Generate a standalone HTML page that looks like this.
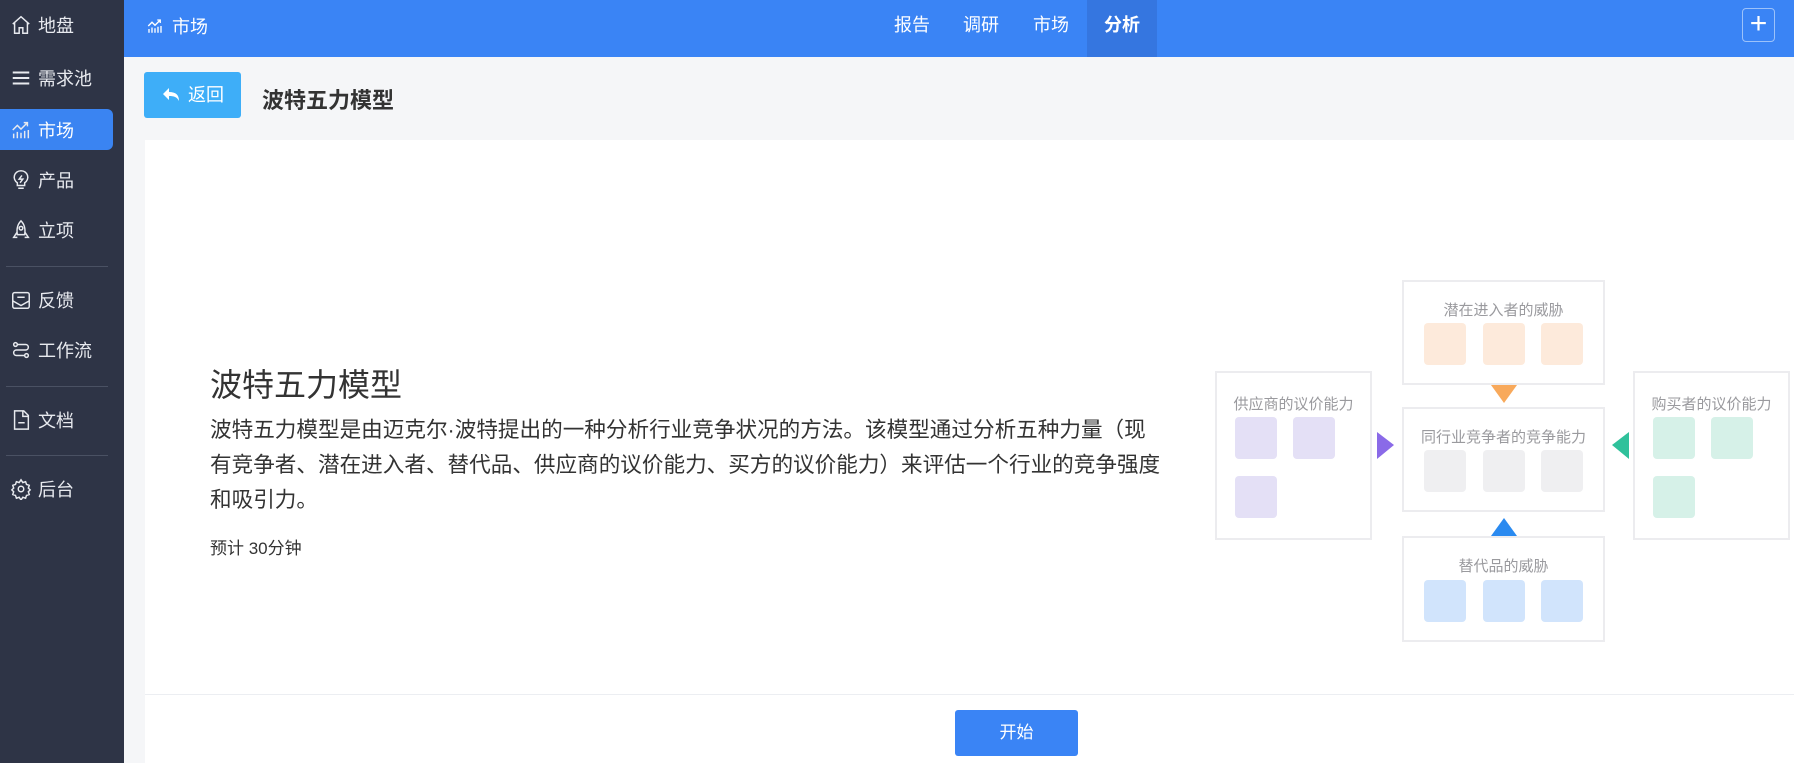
<!DOCTYPE html>
<html><head><meta charset="utf-8"><style>
*{margin:0;padding:0;box-sizing:border-box}
body{width:1794px;height:763px;overflow:hidden;background:#f5f6f8;font-family:"Liberation Sans","Noto Sans CJK SC",sans-serif;position:relative}
.side{position:absolute;left:0;top:0;width:124px;height:763px;background:#2e3446;color:#e8eaef}
.si{position:absolute;left:0;width:113px;height:40px;display:flex;align-items:center;font-size:18px;padding-left:10px}
.si svg{width:22px;height:22px;margin-right:6px;fill:none;stroke:#e8eaef;stroke-width:1.6}
.si.act{background:#3a84f2;border-radius:0 6px 6px 0;color:#fff}
.div{position:absolute;left:6px;width:102px;height:1px;background:#4a5163}
.hdr{position:absolute;left:124px;top:0;right:0;height:57px;background:#3a84f5;color:#fff}
.nav{position:absolute;top:0;height:57px;line-height:50px;font-size:18px;text-align:center}
.card{position:absolute;left:145px;top:140px;width:1649px;height:623px;background:#fff}
.sq{position:absolute;width:42px;height:42px;border-radius:4px}
.box{position:absolute;border:2px solid #ececef;background:#fff}
.bt{position:absolute;font-size:15px;color:#9a9a9e;text-align:center;width:100%}
</style></head><body>
<div class="side">
<div class="si" style="top:5px"><svg viewBox="0 0 24 24"><path d="M3 11l9-8 9 8M5 9v12h5v-6h4v6h5V9"/></svg>地盘</div>
<div class="si" style="top:58px"><svg viewBox="0 0 24 24"><path d="M3 6h18M3 12h18M3 18h18" stroke-width="2.2"/></svg>需求池</div>
<div class="si act" style="top:109px;height:41px"><svg viewBox="0 0 24 24"><path d="M3 12l5-5 4 4 7-7M15 4h4v4M4 21v-5M8 21v-7M12 21v-6M16 21v-8M20 21v-9"/></svg>市场</div>
<div class="si" style="top:160px"><svg viewBox="0 0 24 24"><path d="M12 2a7 7 0 0 0-4 13v3h8v-3a7 7 0 0 0-4-13zM9 21h6M13 7l-3 4h4l-3 4"/></svg>产品</div>
<div class="si" style="top:210px"><svg viewBox="0 0 24 24"><path d="M12 2c4 4 5 9 4 15H8C7 11 8 6 12 2zM8 14l-4 6h4M16 14l4 6h-4"/><circle cx="12" cy="10" r="2"/></svg>立项</div>
<div class="div" style="top:266px"></div>
<div class="si" style="top:280px"><svg viewBox="0 0 24 24"><rect x="3" y="4" width="18" height="17" rx="2"/><path d="M3 13l9 5 9-5M8 9h8"/></svg>反馈</div>
<div class="si" style="top:330px"><svg viewBox="0 0 24 24"><circle cx="6" cy="6" r="2"/><circle cx="18" cy="18" r="2"/><path d="M8 6h9a3 3 0 0 1 0 6H7a3 3 0 0 0 0 6h9"/></svg>工作流</div>
<div class="div" style="top:386px"></div>
<div class="si" style="top:400px"><svg viewBox="0 0 24 24"><path d="M5 2h10l5 5v15H5zM14 2v6h6M9 15h7"/></svg>文档</div>
<div class="div" style="top:455px"></div>
<div class="si" style="top:469px"><svg viewBox="0 0 24 24"><circle cx="12" cy="12" r="3"/><path d="M12 2l2 3 3-1 1 3 3 1-1 3 2 2-2 2 1 3-3 1-1 3-3-1-2 3-2-3-3 1-1-3-3-1 1-3-2-2 2-2-1-3 3-1 1-3 3 1z"/></svg>后台</div>
</div>
<div class="hdr">
<div style="position:absolute;left:22px;top:3px;font-size:18px;display:flex;align-items:center;height:46px"><svg viewBox="0 0 24 24" width="18" height="18" style="margin-right:8px;fill:none;stroke:#fff;stroke-width:1.8"><path d="M3 12l5-5 4 4 7-7M15 4h4v4M4 21v-5M8 21v-7M12 21v-6M16 21v-8M20 21v-9"/></svg>市场</div>
<div class="nav" style="left:762px;width:52px">报告</div>
<div class="nav" style="left:831px;width:52px">调研</div>
<div class="nav" style="left:901px;width:52px">市场</div>
<div class="nav" style="left:963px;width:70px;background:#3576e0;font-weight:bold">分析</div>
<div style="position:absolute;left:1618px;top:8px;width:33px;height:34px;border:1px solid #9cc2fa;border-radius:4px;color:#fff;font-size:30px;line-height:30px;text-align:center">+</div>
</div>
<div style="position:absolute;left:144px;top:72px;width:97px;height:46px;background:#3eaef8;border-radius:3px;color:#fff;font-size:18px;line-height:46px;padding-left:18px;display:flex;align-items:center"><svg width="18" height="16" viewBox="0 0 18 16" style="margin-right:8px"><path d="M7 1L1 7l6 6V9c5 0 8 1 10 5 0-6-3-9-10-9z" fill="#fff"/></svg>返回</div>
<div style="position:absolute;left:262px;top:83px;font-size:22px;font-weight:bold;color:#333">波特五力模型</div>
<div class="card">
<div style="position:absolute;left:65px;top:220px;font-size:32px;color:#333">波特五力模型</div>
<div style="position:absolute;left:65px;top:272px;width:955px;font-size:21.6px;line-height:35px;color:#333">波特五力模型是由迈克尔·波特提出的一种分析行业竞争状况的方法。该模型通过分析五种力量（现有竞争者、潜在进入者、替代品、供应商的议价能力、买方的议价能力）来评估一个行业的竞争强度和吸引力。</div>
<div style="position:absolute;left:65px;top:394px;font-size:17px;color:#333">预计 30分钟</div>
<div style="position:absolute;left:0;top:554px;width:100%;height:1px;background:#eceef2"></div>
<div style="position:absolute;left:810px;top:570px;width:123px;height:46px;background:#3a84f5;border-radius:3px;color:#fff;font-size:17px;line-height:46px;text-align:center">开始</div>
</div>
<div class="box" style="left:1402px;top:280px;width:203px;height:105px"><div class="bt" style="top:17px">潜在进入者的威胁</div></div>
<div class="box" style="left:1402px;top:407px;width:203px;height:105px"><div class="bt" style="top:17px">同行业竞争者的竞争能力</div></div>
<div class="box" style="left:1402px;top:536px;width:203px;height:106px"><div class="bt" style="top:17px">替代品的威胁</div></div>
<div class="box" style="left:1215px;top:371px;width:157px;height:169px"><div class="bt" style="top:20px">供应商的议价能力</div></div>
<div class="box" style="left:1633px;top:371px;width:157px;height:169px"><div class="bt" style="top:20px">购买者的议价能力</div></div>
<div class="sq" style="left:1424px;top:323px;background:#fdeadb"></div><div class="sq" style="left:1483px;top:323px;background:#fdeadb"></div><div class="sq" style="left:1541px;top:323px;background:#fdeadb"></div>
<div class="sq" style="left:1424px;top:450px;background:#efeff1"></div><div class="sq" style="left:1483px;top:450px;background:#efeff1"></div><div class="sq" style="left:1541px;top:450px;background:#efeff1"></div>
<div class="sq" style="left:1424px;top:580px;background:#d1e4fc"></div><div class="sq" style="left:1483px;top:580px;background:#d1e4fc"></div><div class="sq" style="left:1541px;top:580px;background:#d1e4fc"></div>
<div class="sq" style="left:1235px;top:417px;background:#e4e0f6"></div><div class="sq" style="left:1293px;top:417px;background:#e4e0f6"></div><div class="sq" style="left:1235px;top:476px;background:#e4e0f6"></div>
<div class="sq" style="left:1653px;top:417px;background:#d6f1e8"></div><div class="sq" style="left:1711px;top:417px;background:#d6f1e8"></div><div class="sq" style="left:1653px;top:476px;background:#d6f1e8"></div>
<svg style="position:absolute;left:0;top:0" width="1794" height="763">
<polygon points="1491,385 1517,385 1504,403" fill="#f8a95b"/>
<polygon points="1491,536 1517,536 1504,518" fill="#2a8af0"/>
<polygon points="1377,432 1377,459 1394,445" fill="#8a6ae8"/>
<polygon points="1629,432 1629,459 1612,445" fill="#2fc19b"/>
</svg>
</body></html>
